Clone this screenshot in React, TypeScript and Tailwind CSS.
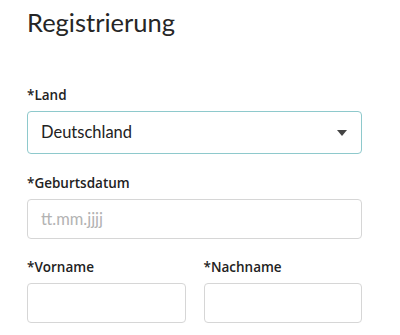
import React from "react";

function Label({ children }: { children: React.ReactNode }) {
  return (
    <label
      className="block text-[13.5px] leading-[20px] font-semibold text-[#222] mb-[6px]"
      style={{ fontFamily: '"Open Sans", Lato, sans-serif' }}
    >
      {children}
    </label>
  );
}

export default function App() {
  return (
    <div
      className="w-[400px] h-[335px] bg-white overflow-hidden px-[27px] pt-[4px]"
      style={{ fontFamily: 'Lato, "Open Sans", sans-serif' }}
    >
      <h1 className="text-[25.5px] leading-[36px] font-normal text-[#262626]">Registrierung</h1>

      <div className="mt-[45px]">
        <Label>*Land</Label>
        <div className="w-[335px] h-[43px] border border-[#8ec9cc] rounded-[4px] flex items-center justify-between pl-[13px] pr-[14px]">
          <span className="text-[16.5px] text-[#222]">Deutschland</span>
          <svg width="10" height="6" viewBox="0 0 10 6" className="mt-[1px]">
            <path d="M0 0h10L5 6z" fill="#444" />
          </svg>
        </div>
      </div>

      <div className="mt-[19px]">
        <Label>*Geburtsdatum</Label>
        <div className="w-[335px] h-[40px] border border-[#d6d6d6] rounded-[4px] flex items-center pl-[13px]">
          <span className="text-[16.5px] text-[#b3b3b3]">tt.mm.jjjj</span>
        </div>
      </div>

      <div className="mt-[18px] grid grid-cols-2 gap-x-[18px] w-[335px]">
        <div>
          <Label>*Vorname</Label>
          <div className="h-[40px] border border-[#d6d6d6] rounded-[4px]" />
        </div>
        <div>
          <Label>*Nachname</Label>
          <div className="h-[40px] border border-[#d6d6d6] rounded-[4px]" />
        </div>
      </div>
    </div>
  );
}
